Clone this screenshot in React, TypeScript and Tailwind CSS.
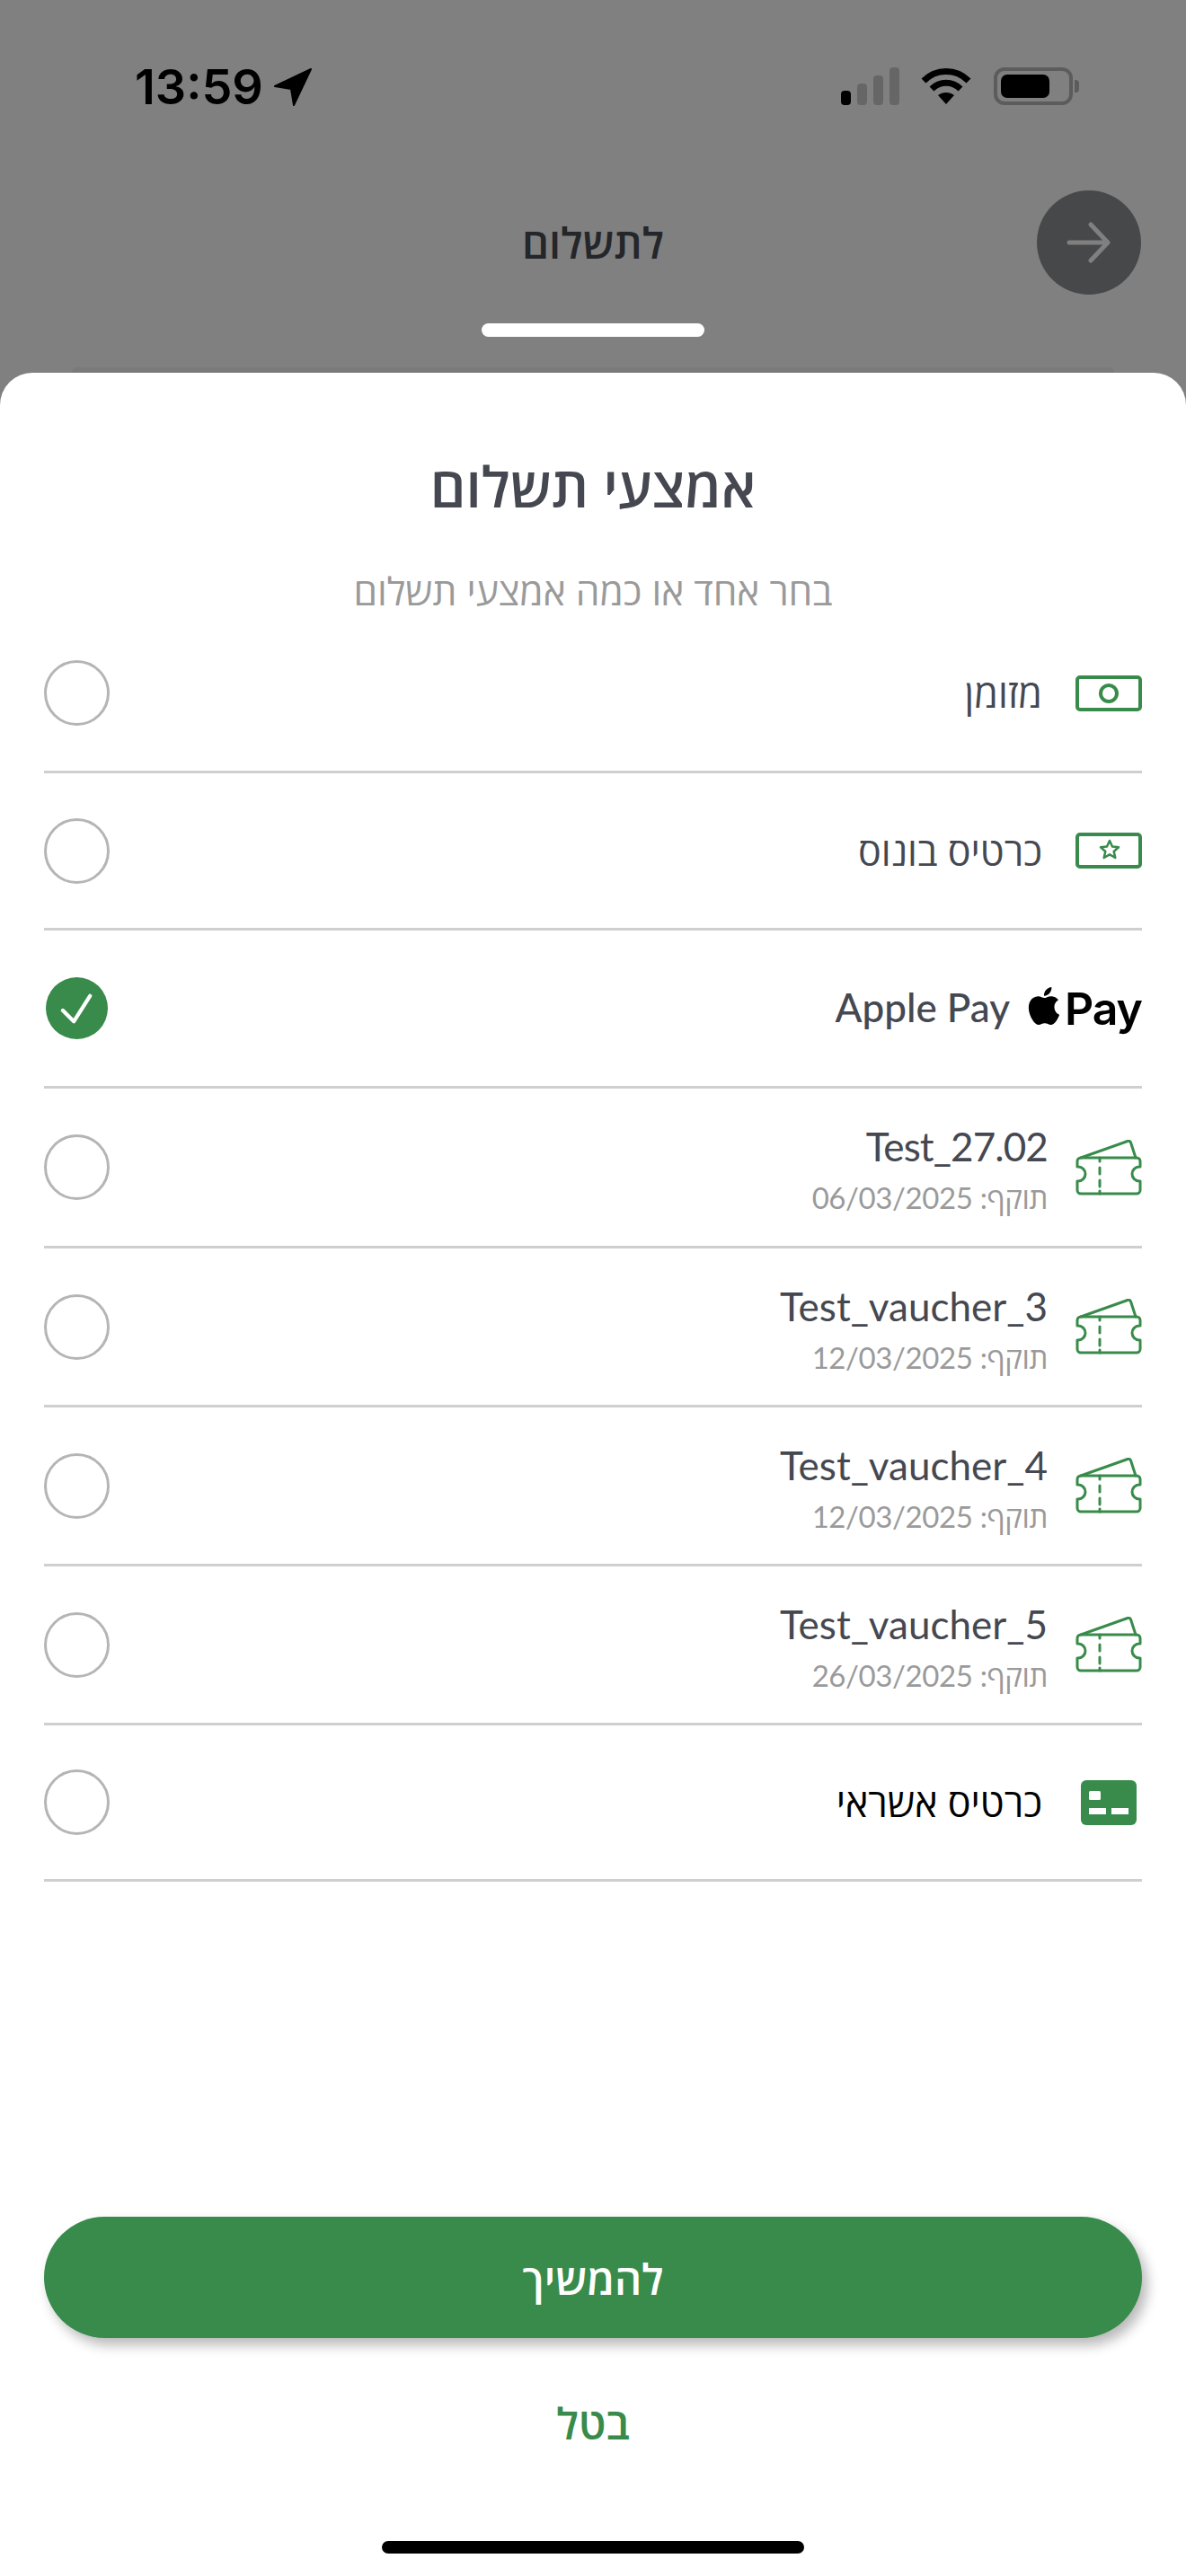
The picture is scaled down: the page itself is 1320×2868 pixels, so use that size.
import React from "react";
import { SiApple } from "react-icons/si";

const GREEN = "#388b4a";

function CashIcon({ star }: { star?: boolean }) {
  return (
    <svg width="74" height="40" viewBox="0 0 74 40" fill="none" stroke={GREEN}>
      <rect x="2" y="2" width="70" height="36" rx="3" strokeWidth="4" />
      {star ? (
        <path d="M38 9l3 6.600 7 .7-5.300 4.700 1.600 7-6.300-3.700-6.300 3.700 1.600-7-5.300-4.700 7-.7z" strokeWidth="2.500" strokeLinejoin="round" />
      ) : (
        <circle cx="37" cy="20" r="9" strokeWidth="4" />
      )}
    </svg>
  );
}

function TicketIcon() {
  return (
    <svg width="74" height="62" viewBox="0 0 74 62" fill="none" stroke={GREEN} strokeWidth="3" strokeLinejoin="round" strokeLinecap="round">
      <path d="M6 20h62a4 4 0 0 1 4 4v6h-1a8 8 0 0 0 0 16h1v10a4 4 0 0 1-4 4H6a4 4 0 0 1-4-4V46h1a8 8 0 0 0 0-16H2v-6a4 4 0 0 1 4-4z" />
      <path d="M6 20L58 1.500a3 3 0 0 1 3.500 1.500L67 20" />
      <path d="M27 20v4M27 31v7M27 45v7M27 57v3" />
    </svg>
  );
}

function CreditIcon() {
  return (
    <svg width="62" height="50" viewBox="0 0 62 50">
      <rect width="62" height="50" rx="6" fill={GREEN} />
      <rect x="9" y="12" width="13" height="10" rx="1.500" fill="#fff" />
      <rect x="9" y="31" width="19" height="7" fill="#fff" />
      <rect x="34" y="31" width="19" height="7" fill="#fff" />
    </svg>
  );
}

function Radio({ on }: { on?: boolean }) {
  if (on) {
    return (
      <div className="flex h-[73px] w-[73px] shrink-0 items-center justify-center">
        <div className="flex h-[69px] w-[69px] items-center justify-center rounded-full bg-[#388b4a]">
          <svg width="38" height="34" viewBox="0 0 40 36" fill="none" stroke="#fff" strokeWidth="4.500" strokeLinecap="round" strokeLinejoin="round">
            <path d="M3 20l13 13L35 3" />
          </svg>
        </div>
      </div>
    );
  }
  return <div className="h-[73px] w-[73px] shrink-0 rounded-full border-[3px] border-[#b5b5b5]" />;
}

type Row = { h: string; icon: React.ReactNode; title?: string; sub?: string; black?: boolean; apple?: boolean; on?: boolean; tight?: boolean };

const rows: Row[] = [
  { h: "h-[176px]", icon: <CashIcon />, title: "מזומן" },
  { h: "h-[175px]", icon: <CashIcon star />, title: "כרטיס בונוס" },
  { h: "h-[176px]", icon: null, apple: true, on: true },
  { h: "h-[178px]", icon: <TicketIcon />, title: "Test_27.02", sub: "06/03/2025", tight: true },
  { h: "h-[177px]", icon: <TicketIcon />, title: "Test_vaucher_3", sub: "12/03/2025" },
  { h: "h-[177px]", icon: <TicketIcon />, title: "Test_vaucher_4", sub: "12/03/2025" },
  { h: "h-[177px]", icon: <TicketIcon />, title: "Test_vaucher_5", sub: "26/03/2025" },
  { h: "h-[174px]", icon: <CreditIcon />, title: "כרטיס אשראי", black: true },
];

function PayRow({ r }: { r: Row }) {
  return (
    <div dir="rtl" className={`flex ${r.h} items-center border-b-[3px] border-[#cfcfcf]`}>
      {r.apple ? (
        <>
          <div className="flex w-[127px] shrink-0 items-center justify-end text-black" dir="ltr">
            <SiApple className="mb-[6px] h-[46px] w-[42px] shrink-0" />
            <span className="ml-[2px] font-['Inter'] text-[50px] leading-none font-semibold tracking-[-1px]">Pay</span>
          </div>
          <span dir="ltr" className="mr-[20px] mb-[3px] font-['Lato'] text-[44px] leading-none font-medium text-[#454851]">Apple Pay</span>
        </>
      ) : (
        <>
          <div className="flex w-[74px] shrink-0 items-center justify-center">{r.icon}</div>
          {r.sub ? (
            <div className="mr-[31px] pt-[5px]">
              <div className={`font-['Lato'] text-[44px] leading-[54px] text-[#454851] ${r.tight ? "tracking-[-0.9px]" : ""}`}>{r.title}</div>
              <div className="mt-[8px] font-['Lato','Open_Sans'] text-[33px] leading-[44px] tracking-[-0.4px] text-[#9a9a9a]">
                תוקף: {r.sub}
              </div>
            </div>
          ) : (
            <span className={`mr-[37px] font-['Open_Sans'] text-[43px] leading-none ${r.black ? "text-black" : "text-[#454851]"}`}>{r.title}</span>
          )}
        </>
      )}
      <div className="mr-auto">
        <Radio on={r.on} />
      </div>
    </div>
  );
}

export default function App() {
  return (
    <div className="flex h-[2868px] w-[1320px] flex-col overflow-hidden bg-[#808080] font-['Open_Sans',sans-serif]">
      <div className="flex h-[212px] items-start justify-between pt-[72px] pr-[119px] pl-[150px]">
        <div className="flex items-center gap-[12px]">
          <span className="font-['Inter'] text-[54px] leading-[50px] font-semibold text-black">13:59</span>
          <svg width="42" height="42" viewBox="0 0 42 42" fill="#000">
            <path d="M41 1L1 20l18 3 3 18z" strokeLinejoin="round" stroke="#000" strokeWidth="2" />
          </svg>
        </div>
        <div className="flex items-center pt-[3px]">
          <svg className="mr-[22px]" width="66" height="42" viewBox="0 0 66 42">
            <rect x="0" y="26" width="11" height="16" rx="4" fill="#000" />
            <rect x="18" y="18" width="11" height="24" rx="4" fill="#666" />
            <rect x="36" y="9" width="11" height="33" rx="4" fill="#666" />
            <rect x="54" y="0" width="11" height="42" rx="4" fill="#666" />
          </svg>
          <svg className="mr-[24px]" width="58" height="42" viewBox="0 0 56 42" fill="none" stroke="#000" strokeWidth="7">
            <path d="M3 15c14-14 36-14 50 0" />
            <path d="M12 24c9-9 23-9 32 0" />
            <path d="M28 41l-9-10c5-4 13-4 18 0z" fill="#000" stroke="none" />
          </svg>
          <div className="flex items-center">
            <div className="flex h-[42px] w-[88px] items-center rounded-[12px] border-[4px] border-[#5c5c5c] p-[4px]">
              <div className="h-full w-[54px] rounded-[7px] bg-black" />
            </div>
            <div className="ml-[2px] h-[14px] w-[5px] rounded-r bg-[#5c5c5c]" />
          </div>
        </div>
      </div>

      <div className="relative flex h-[116px] items-center justify-center">
        <span className="font-['Open_Sans'] text-[47px] leading-none font-semibold text-[#24262a]">לתשלום</span>
        <div className="absolute top-0 right-[50px] flex h-[116px] w-[116px] items-center justify-center rounded-full bg-[#47484a]">
          <svg width="50" height="46" viewBox="0 0 50 46" fill="none" stroke="#808080" strokeWidth="5" strokeLinecap="round" strokeLinejoin="round">
            <path d="M3 23h43M27 3l19 20-19 20" />
          </svg>
        </div>
      </div>

      <div className="mx-auto mt-[32px] h-[15px] w-[248px] rounded-full bg-white" />

      <div className="relative mt-[40px] flex flex-1 flex-col rounded-t-[36px] bg-white px-[49px]">
        <div className="absolute -top-[6px] left-[80px] h-[6px] w-[1160px] rounded-t-[10px] bg-[#7a7a7a]" />
        <h1 dir="rtl" className="mt-[96px] text-center font-['Open_Sans'] text-[62px] leading-[60px] font-semibold text-[#454851]">אמצעי תשלום</h1>
        <p dir="rtl" className="mt-[72px] text-center font-['Open_Sans'] text-[42.5px] leading-[30px] text-[#9a9a9a]">בחר אחד או כמה אמצעי תשלום</p>
        <div className="mt-[12px]">
          {rows.map((r, i) => (
            <PayRow key={i} r={r} />
          ))}
        </div>
        <button className="mt-[373px] h-[135px] w-full shrink-0 rounded-full bg-[#388b4a] pt-[3px] font-['Open_Sans'] text-[47px] font-semibold text-white shadow-[6px_8px_14px_rgba(0,0,0,0.28)]">
          להמשיך
        </button>
        <div className="mt-[70px] text-center font-['Open_Sans'] text-[48px] leading-[50px] font-semibold text-[#388b4a]">בטל</div>
        <div className="absolute bottom-[25px] left-[425px] h-[14px] w-[470px] rounded-full bg-black" />
      </div>
    </div>
  );
}
